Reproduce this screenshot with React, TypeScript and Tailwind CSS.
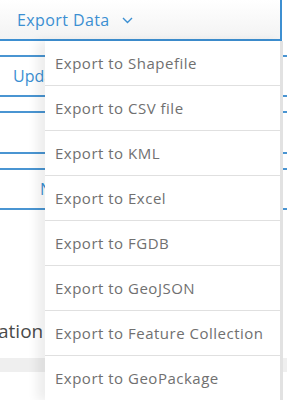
import React from "react";

const items = [
  "Export to Shapefile",
  "Export to CSV file",
  "Export to KML",
  "Export to Excel",
  "Export to FGDB",
  "Export to GeoJSON",
  "Export to Feature Collection",
  "Export to GeoPackage",
];

export default function App() {
  return (
    <div
      className="relative w-[287px] h-[400px] overflow-hidden bg-white"
      style={{ fontFamily: '"Open Sans", "Noto Sans", sans-serif' }}
    >
      {/* Header button */}
      <div className="flex h-[41px] w-[282px] items-center border-b-2 border-r-2 border-[#3d8fd1] bg-gradient-to-b from-white to-[#f3f3f3] pl-[17px]">
        <span className="text-[16px] tracking-[0.4px] text-[#3b8fd2]">Export Data</span>
        <svg className="ml-[12px] mt-[1px]" width="11" height="7" viewBox="0 0 11 7" fill="none">
          <path d="M1 1l4.5 4.5L10 1" stroke="#3b8fd2" strokeWidth="1.4" />
        </svg>
      </div>

      {/* Background content */}
      <div className="flex flex-col">
        <div className="mt-[14px] flex h-[42px] w-[300px] items-center border-y-2 border-[#4a95d2] pl-[13px]">
          <span className="text-[16px] text-[#3b8fd2]">Update</span>
        </div>
        <div className="mt-[14px] h-[43px] w-[300px] border-y-2 border-[#4a95d2]" />
        <div className="mt-[14px] flex h-[42px] w-[300px] items-center border-y-2 border-[#4a95d2] pl-[40px]">
          <span className="text-[16px] text-[#3b8fd2]">N</span>
        </div>
        <div className="mt-[106px] h-[30px] -ml-[2px] flex items-center">
          <span className="text-[19px] text-[#4a4a4a]">ation</span>
        </div>
        <div className="mt-[12px] h-[14px] w-full bg-[#efefef]" />
      </div>

      {/* Dropdown menu */}
      <div className="absolute left-[45px] top-[41px] w-[238px] border-r-[3px] border-[#e2e2e2] bg-white shadow-[-8px_0_10px_rgba(0,0,0,0.07)]">
        {items.map((t) => (
          <div
            key={t}
            className="flex h-[45px] items-center border-b border-[#e0e0e0] pl-[10px] text-[15px] tracking-[0.5px] text-[#707070]"
          >
            {t}
          </div>
        ))}
      </div>
    </div>
  );
}
